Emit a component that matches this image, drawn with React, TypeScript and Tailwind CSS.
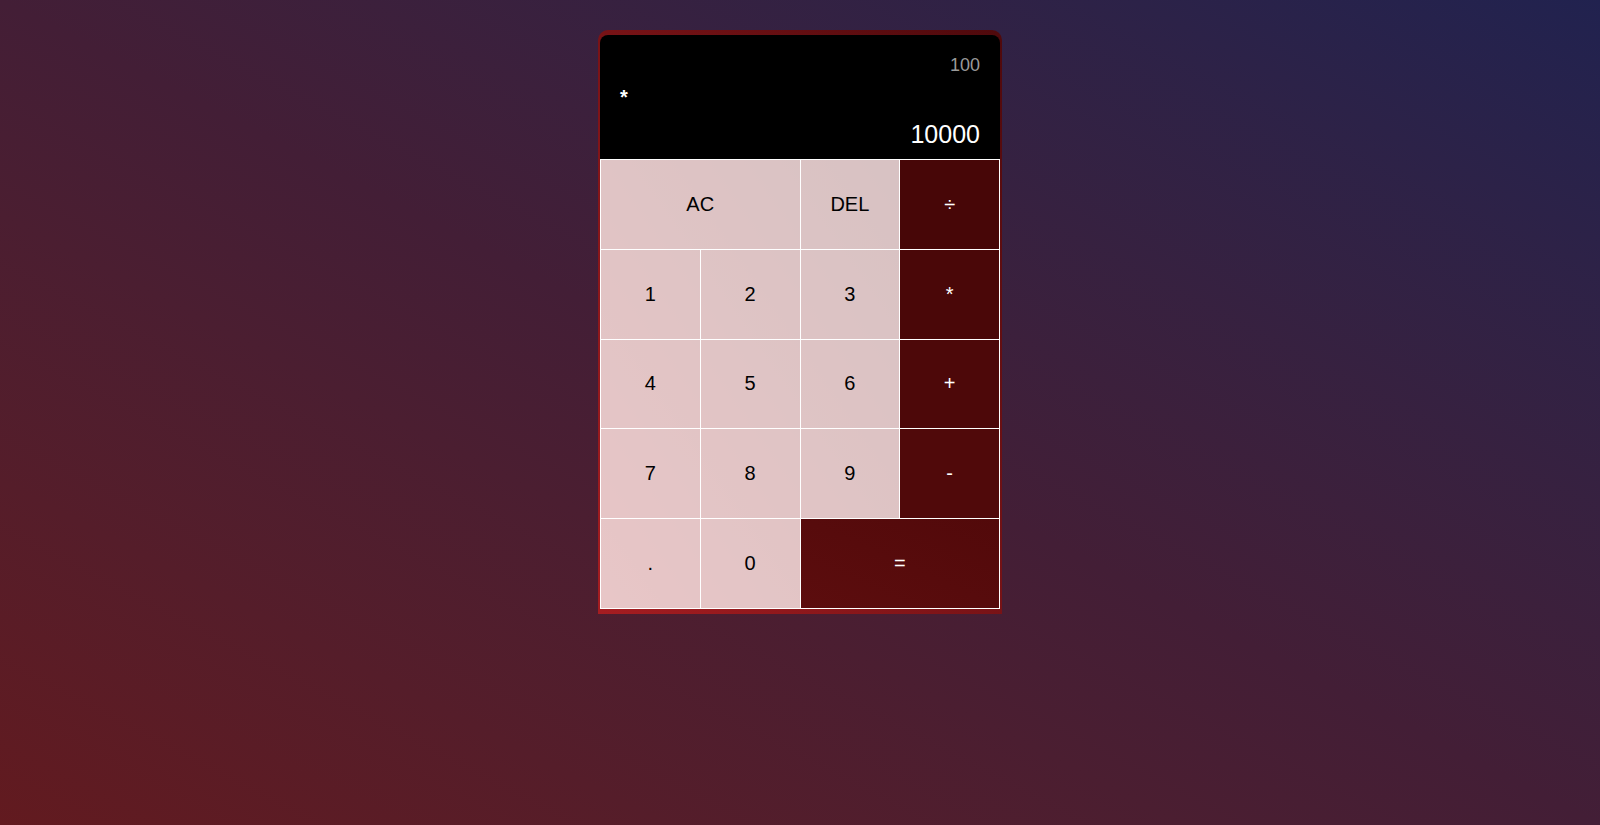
import React from "react";

type Key = { label: string; bg?: string; span?: boolean };

// operator colours darken slightly toward the top
const keys: Key[] = [
  { label: "AC", span: true },
  { label: "DEL" },
  { label: "÷", bg: "bg-[#470607]" },
  { label: "1" },
  { label: "2" },
  { label: "3" },
  { label: "*", bg: "bg-[#4a0708]" },
  { label: "4" },
  { label: "5" },
  { label: "6" },
  { label: "+", bg: "bg-[#4d0809]" },
  { label: "7" },
  { label: "8" },
  { label: "9" },
  { label: "-", bg: "bg-[#50090a]" },
  { label: "." },
  { label: "0" },
  { label: "=", bg: "bg-linear-to-tr from-[#5c0d0e] to-[#52090a]", span: true },
];

export default function App() {
  return (
    <div
      className="min-h-screen w-full flex justify-center bg-linear-to-tr from-[#621a1f] via-[#431e36] to-[#21224f]"
      style={{ fontFamily: '"Liberation Sans", Arial, sans-serif' }}
    >
      <div className="mt-[30px] w-[404px] h-fit rounded-t-[10px] px-[2px] pt-[5px] pb-[5px] bg-linear-to-tr from-[#a51d21] to-[#4f090c]">
        {/* Display */}
        <div className="h-[124px] bg-black rounded-t-[8px] flex flex-col px-5 pt-5 pb-[10px]">
          <div className="text-[18px] leading-[21px] text-right text-[#9a9a9a]">100</div>
          <div className="mt-[10px] text-[20px] leading-[23px] font-bold text-white">*</div>
          <div className="mt-[11px] text-[25px] leading-[29px] text-right text-white">10000</div>
        </div>

        {/* Keypad */}
        <div className="grid grid-cols-4 auto-rows-[89.8px] border-l border-t border-white">
          {keys.map((k) => (
            <button
              key={k.label}
              className={
                "border-r border-b border-white text-[20px] flex items-center justify-center pb-px " +
                (k.span ? "col-span-2 " : "") +
                (k.bg ? k.bg + " text-white" : "bg-white/75 text-black")
              }
            >
              {k.label}
            </button>
          ))}
        </div>
      </div>
    </div>
  );
}
